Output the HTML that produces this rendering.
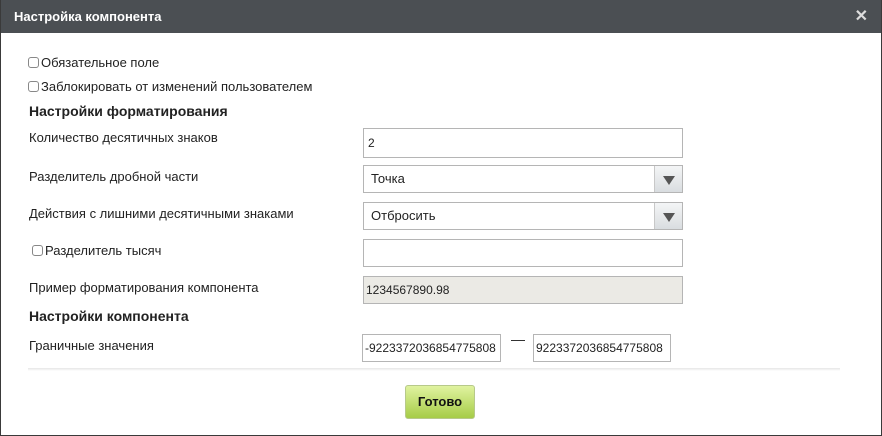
<!DOCTYPE html>
<html><head><meta charset="utf-8"><style>
*{box-sizing:border-box;margin:0;padding:0}
body{width:882px;height:436px;background:#fff;font-family:"Liberation Sans",Arial,sans-serif;font-size:13px;color:#222;position:relative;overflow:hidden}
.frame{position:absolute;left:0;top:0;width:882px;height:436px;border:1px solid #3a3a3a;border-top:none}
.hdr{position:absolute;left:0;top:0;width:882px;height:33px;background:#4b4f53;color:#fff;font-weight:bold;font-size:13px;line-height:33px;padding-left:14px}
.x{position:absolute;right:14px;top:0;color:#ddd;font-size:16px;line-height:33px;font-weight:bold}
.a{position:absolute;white-space:nowrap}
.cb{display:inline-block;width:11px;height:11px;border:1px solid #888;border-radius:3px;vertical-align:-1px;margin-right:2px;background:#fff}
.h{font-weight:bold;font-size:14px}
.in{position:absolute;border:1px solid #b5b5b5;background:#fff;padding-left:4px;font-size:12px}
.sel{padding-left:7px;font-size:13px}
.arr{position:absolute;right:0;top:0;bottom:0;width:28px;border-left:1px solid #c8c8c8;background:linear-gradient(#f4f5f6,#d9dde0)}
.arr:after{content:"";position:absolute;left:8px;top:10px;border-left:6px solid transparent;border-right:6px solid transparent;border-top:9px solid #555}
.sep{position:absolute;left:28px;top:368px;width:812px;height:3px;background:linear-gradient(#e6e6e6,#fff)}
.btn{position:absolute;left:405px;top:385px;width:70px;height:34px;border:1px solid #b7c98a;border-radius:3px;background:linear-gradient(#e0f3a0,#a6cc47);font-weight:bold;font-size:13px;text-align:center;line-height:32px;color:#111}
</style></head><body>
<div class="hdr">Настройка компонента<span class="x">✕</span></div>
<div class="a" style="left:28px;top:55px"><span class="cb"></span>Обязательное поле</div>
<div class="a" style="left:28px;top:79px"><span class="cb"></span>Заблокировать от изменений пользователем</div>
<div class="a h" style="left:29px;top:103px">Настройки форматирования</div>
<div class="a" style="left:29px;top:130px">Количество десятичных знаков</div>
<div class="in" style="left:363px;top:128px;width:320px;height:30px;line-height:28px">2</div>
<div class="a" style="left:29px;top:169px">Разделитель дробной части</div>
<div class="in sel" style="left:363px;top:165px;width:320px;height:28px;line-height:26px">Точка<span class="arr"></span></div>
<div class="a" style="left:29px;top:206px">Действия с лишними десятичными знаками</div>
<div class="in sel" style="left:363px;top:202px;width:320px;height:28px;line-height:26px">Отбросить<span class="arr"></span></div>
<div class="a" style="left:32px;top:243px"><span class="cb"></span>Разделитель тысяч</div>
<div class="in" style="left:363px;top:239px;width:320px;height:28px"></div>
<div class="a" style="left:29px;top:280px">Пример форматирования компонента</div>
<div class="in" style="left:363px;top:276px;width:320px;height:28px;line-height:26px;background:#ebeae5;padding-left:2px">1234567890.98</div>
<div class="a h" style="left:29px;top:308px">Настройки компонента</div>
<div class="a" style="left:29px;top:338px">Граничные значения</div>
<div class="in" style="left:362px;top:334px;width:139px;height:28px;line-height:26px;padding-left:2px">-9223372036854775808</div>
<div class="a" style="left:511px;top:331px;font-size:14px">—</div>
<div class="in" style="left:533px;top:334px;width:138px;height:28px;line-height:26px;padding-left:2px">9223372036854775808</div>
<div class="sep"></div>
<div class="btn">Готово</div>
<div class="frame"></div>
</body></html>
